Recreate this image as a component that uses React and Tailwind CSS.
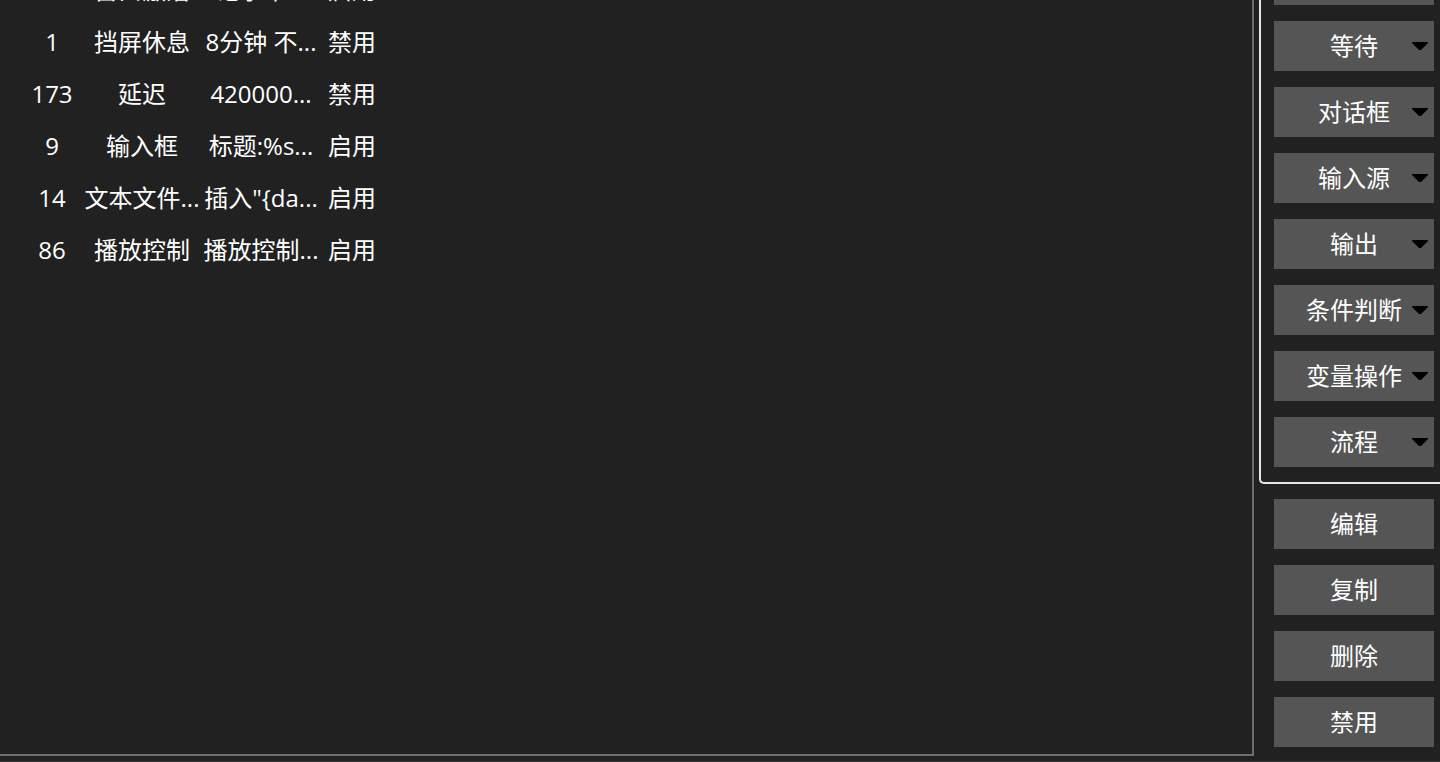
import React from 'react';

const rows = [
  { id: '2', name: '窗口激活', detail: '记事本...', state: '启用' },
  { id: '1', name: '挡屏休息', detail: '8分钟 不...', state: '禁用' },
  { id: '173', name: '延迟', detail: '420000...', state: '禁用' },
  { id: '9', name: '输入框', detail: '标题:%s...', state: '启用' },
  { id: '14', name: '文本文件...', detail: '插入"{da...', state: '启用' },
  { id: '86', name: '播放控制', detail: '播放控制...', state: '启用' },
];

const groups = ['鼠标键盘', '等待', '对话框', '输入源', '输出', '条件判断', '变量操作', '流程'];
const actions = ['编辑', '复制', '删除', '禁用'];

function Arrow() {
  return (
    <svg width="16" height="9" viewBox="0 0 16 9" className="absolute right-[6px] top-[21px]">
      <polygon points="0,0 16,0 16,1 9,8 7,8 0,1" fill="#000" />
    </svg>
  );
}

function ToolButton({ label, menu }) {
  return (
    <button className="relative flex h-[50px] w-[160px] shrink-0 items-center justify-center bg-[#555555] text-[24px] leading-none text-white">
      {label}
      {menu && <Arrow />}
    </button>
  );
}

export default function App() {
  return (
    <div
      className="flex h-[762px] w-[1440px] flex-col overflow-hidden bg-[#212121] text-white"
      style={{ fontFamily: '"Open Sans", "Noto Sans CJK SC", sans-serif' }}
    >
      <div className="flex h-[761px] items-start">
        {/* Step list */}
        <div className="h-[756px] w-[1254px] shrink-0 overflow-hidden border-r-2 border-b-2 border-[#6e6e6e]">
          <div className="-mt-[36px] flex flex-col pl-[16px]">
            {rows.map((r, i) => (
              <div key={i} className="flex h-[52px] items-center whitespace-nowrap text-[24px] leading-none">
                <div className="flex w-[72px] justify-center">{r.id}</div>
                <div className="flex w-[108px] justify-center">{r.name}</div>
                <div className="flex w-[130px] justify-center">{r.detail}</div>
                <div className="flex w-[52px] justify-center">{r.state}</div>
              </div>
            ))}
          </div>
        </div>

        {/* Command panel */}
        <div className="flex w-[200px] shrink-0 flex-col pl-[5px]">
          <div className="-mt-[45px] flex flex-col gap-4 rounded-bl-[5px] border-b-2 border-l-2 border-[#e6e6e6] pb-[15px] pl-[13px]">
            {groups.map((g) => (
              <ToolButton key={g} label={g} menu />
            ))}
          </div>
          <div className="mt-[15px] flex flex-col gap-4 pl-[15px]">
            {actions.map((a) => (
              <ToolButton key={a} label={a} />
            ))}
          </div>
        </div>
      </div>
      <div className="h-px bg-[#3a3a3a]" />
    </div>
  );
}
